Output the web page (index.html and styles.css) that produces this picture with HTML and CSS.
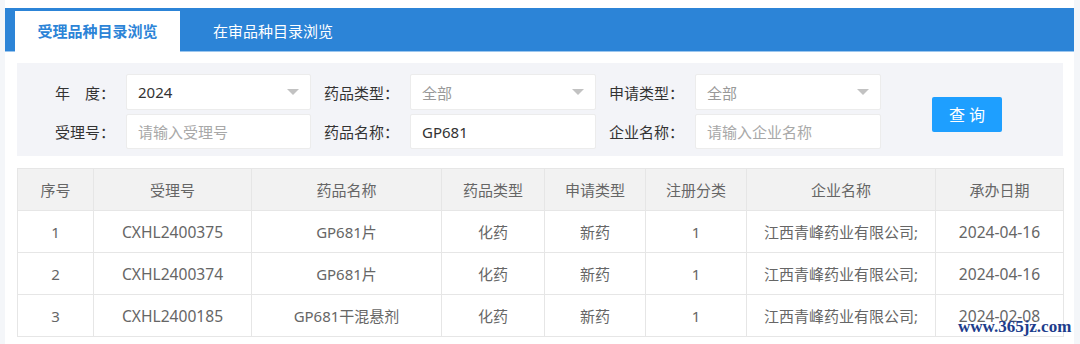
FILE: index.html
```html
<!DOCTYPE html>
<html>
	<head>
	<meta charset="utf-8">
	<meta name="viewport" content="width=device-width, initial-scale=1.0"/>
	<link rel="stylesheet" href="styles.css">
	</head>
	<body>
		<div class="panel">
			<div class="tabs">
				<div class="tab active">受理品种目录浏览</div>
				<div class="tab">在审品种目录浏览</div>
			</div>
			<div class="content">
				<form class="filter">
					<label class="lbl">年　度：</label>
					<div class="select"><span>2024</span><i class="caret"></i></div>
					<label class="lbl">药品类型：</label>
					<div class="select empty"><span>全部</span><i class="caret"></i></div>
					<label class="lbl">申请类型：</label>
					<div class="select empty"><span>全部</span><i class="caret"></i></div>
					<div class="btn-cell"><button type="button" class="btn">查询</button></div>

					<label class="lbl">受理号：</label>
					<input class="inp" type="text" placeholder="请输入受理号">
					<label class="lbl">药品名称：</label>
					<input class="inp" type="text" value="GP681">
					<label class="lbl">企业名称：</label>
					<input class="inp" type="text" placeholder="请输入企业名称">
				</form>

				<table class="grid">
					<colgroup>
						<col style="width:76px"><col style="width:158px"><col style="width:190px"><col style="width:103px">
						<col style="width:101px"><col style="width:101px"><col style="width:189px"><col style="width:128px">
					</colgroup>
					<thead>
						<tr><th>序号</th><th>受理号</th><th>药品名称</th><th>药品类型</th><th>申请类型</th><th>注册分类</th><th>企业名称</th><th>承办日期</th></tr>
					</thead>
					<tbody>
						<tr><td>1</td><td class="num">CXHL2400375</td><td>GP681片</td><td>化药</td><td>新药</td><td>1</td><td>江西青峰药业有限公司;</td><td class="num">2024-04-16</td></tr>
						<tr><td>2</td><td class="num">CXHL2400374</td><td>GP681片</td><td>化药</td><td>新药</td><td>1</td><td>江西青峰药业有限公司;</td><td class="num">2024-04-16</td></tr>
						<tr><td>3</td><td class="num">CXHL2400185</td><td>GP681干混悬剂</td><td>化药</td><td>新药</td><td>1</td><td>江西青峰药业有限公司;</td><td class="num">2024-02-08</td></tr>
					</tbody>
				</table>
			</div>
		</div>
		<div class="mark">www.365jz.com</div>
	</body>
</html>
```

FILE: styles.css
```css
html, body {
	margin: 0;
	padding: 0;
	background-color: #f4f6f9;
	font-family: "Noto Sans", "Noto Sans CJK SC", sans-serif;
	font-size: 15px;
	color: #333;
	overflow: hidden;
}

.panel {
	margin: 0 6px 0 5px;
	padding-top: 8px;
	height: 344px;
	box-sizing: border-box;
	background-color: #ffffff;
}

.tabs {
	display: flex;
	align-items: flex-end;
	height: 43px;
	padding-left: 10px;
	background-color: #2c84d7;
	border-bottom: 1px solid #9cc6ee;
}

.tab {
	height: 40px;
	line-height: 40px;
	padding: 0 33px;
	color: #ffffff;
	font-size: 15px;
}

.tab.active {
	width: 165px;
	padding: 0;
	box-sizing: border-box;
	text-align: center;
	background-color: #ffffff;
	color: #2c84d7;
	font-weight: bold;
	margin-bottom: -1px;
	height: 41px;
}

.content {
	padding: 11px 11px 0 12px;
}

.filter {
	display: grid;
	grid-template-columns: 109px 185px 99px 186px 99px 186px auto;
	grid-template-rows: 36px 35px;
	row-gap: 4px;
	align-items: center;
	margin: 0;
	padding: 11px 0 7px 0;
	background-color: #f3f4f8;
}

.lbl {
	text-align: right;
	padding-right: 11px;
	color: #333;
	white-space: nowrap;
}

.select, .inp {
	box-sizing: border-box;
	height: 100%;
	border: 1px solid #ececec;
	border-radius: 2px;
	background-color: #ffffff;
	font-family: inherit;
	font-size: 15px;
	color: #333;
}

.select {
	display: flex;
	align-items: center;
	justify-content: space-between;
	padding: 0 11px 0 11px;
}

.select.empty span {
	color: #999;
}

.caret {
	width: 0;
	height: 0;
	border-left: 6px solid transparent;
	border-right: 6px solid transparent;
	border-top: 6px solid #c2c2c2;
}

.inp {
	padding: 0 11px;
	outline: none;
}

.inp::placeholder {
	color: #a8a8a8;
}

.btn-cell {
	grid-row: 1 / span 2;
	grid-column: 7;
	padding-left: 51px;
}

.btn {
	width: 70px;
	height: 35px;
	margin-top: 5px;
	border: none;
	border-radius: 2px;
	background-color: #1e9fff;
	color: #ffffff;
	font-family: inherit;
	font-size: 16px;
	letter-spacing: 4px;
	text-indent: 4px;
}

.grid {
	margin-top: 12px;
	width: 1046px;
	border-collapse: collapse;
	table-layout: fixed;
}

.grid th, .grid td {
	height: 41px;
	padding: 0 6px;
	border: 1px solid #e6e6e6;
	text-align: center;
	font-weight: normal;
	color: #666;
	white-space: nowrap;
	overflow: hidden;
}

.grid th {
	background-color: #f2f2f2;
}

.grid td.num {
	font-size: 15.6px;
}

.mark {
	position: absolute;
	left: 958px;
	top: 317px;
	font-family: "Liberation Serif", serif;
	font-weight: bold;
	font-size: 17px;
	color: #1d3d8c;
}
```
